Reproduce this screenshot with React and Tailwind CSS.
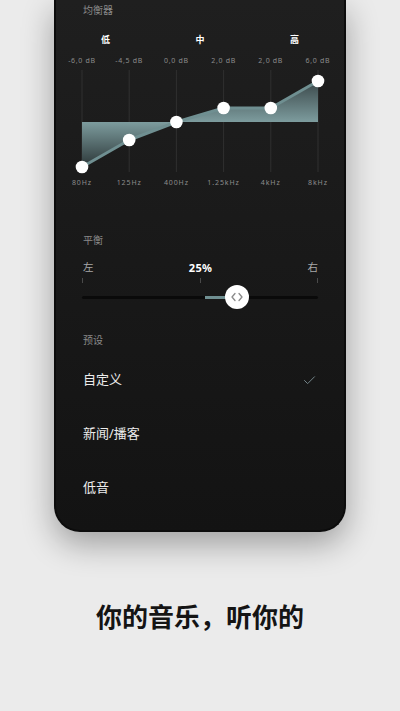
import React from "react";
import { Check } from "lucide-react";

const FONT = { fontFamily: '"Noto Sans", "Noto Sans CJK SC", sans-serif' };

const db = ["-6,0 dB", "-4,5 dB", "0,0 dB", "2,0 dB", "2,0 dB", "6,0 dB"];
const freqs = ["80Hz", "125Hz", "400Hz", "1.25kHz", "4kHz", "8kHz"];
const ys = [101, 74, 56, 42, 42, 15];
const xs = [0, 47.2, 94.4, 141.6, 188.8, 236];

function Chart() {
  const pts = xs.map((x, i) => `${x},${ys[i]}`).join(" ");
  const poly = `0,56 ${pts} 236,56`;
  return (
    <svg width="236" height="110" viewBox="0 0 236 110" className="block overflow-visible">
      <defs>
        <linearGradient id="eqfill" gradientUnits="userSpaceOnUse" x1="0" y1="15" x2="0" y2="101">
          <stop offset="0" stopColor="#3a4749" />
          <stop offset="0.477" stopColor="#7d9c9e" />
          <stop offset="1" stopColor="#2b3637" />
        </linearGradient>
      </defs>
      {xs.map((x, i) => (
        <line key={i} x1={x} y1="4" x2={x} y2="106" stroke="#303030" strokeWidth="1" />
      ))}
      <polygon points={poly} fill="url(#eqfill)" />
      <polyline points={pts} fill="none" stroke="#6f8f91" strokeWidth="3" strokeLinejoin="round" />
      {xs.map((x, i) => (
        <circle key={i} cx={x} cy={ys[i]} r="6.3" fill="#ffffff" />
      ))}
    </svg>
  );
}

export default function App() {
  return (
    <div className="w-[400px] h-[711px] bg-[#ebebeb] overflow-hidden flex flex-col items-center" style={FONT}>
      <div className="w-[292px] h-[532px] shrink-0 rounded-b-[26px] border-x-2 border-b-2 border-[#0c0c0c] bg-gradient-to-b from-[#1f1f1f] to-[#131313] shadow-[0_12px_32px_rgba(0,0,0,0.33)] px-[26px] pt-[3px] flex flex-col">
        <div className="text-[10px] leading-[14px] text-[#8a8a8a] pl-px">均衡器</div>

        <div className="-mx-[23.6px] mt-[17px] flex text-[9px] leading-[12px] font-bold text-white">
          <div className="w-[94.4px] text-center">低</div>
          <div className="w-[94.4px] text-center">中</div>
          <div className="w-[94.4px] text-center">高</div>
        </div>

        <div className="-mx-[23.6px] mt-[10px] flex text-[7px] leading-[10px] tracking-[0.7px] text-[#8c8c8c]">
          {db.map((d, i) => (
            <div key={i} className="w-[47.2px] text-center whitespace-nowrap">{d}</div>
          ))}
        </div>

        <div className="mt-0">
          <Chart />
        </div>

        <div className="-mx-[23.6px] mt-[2px] flex text-[7px] leading-[10px] tracking-[0.9px] text-[#8c8c8c]">
          {freqs.map((d, i) => (
            <div key={i} className="w-[47.2px] text-center whitespace-nowrap">{d}</div>
          ))}
        </div>

        <div className="mt-[45px] text-[10px] leading-[14px] text-[#8a8a8a] pl-px">平衡</div>

        <div className="mt-[13px] flex items-center justify-between h-[16px]">
          <span className="text-[10.5px] text-[#a8a8a8] pl-px">左</span>
          <span className="text-[11px] font-bold text-white tracking-[0.3px]">25%</span>
          <span className="text-[10.5px] text-[#a8a8a8]">右</span>
        </div>

        <div className="mt-[2px] flex justify-between h-[5px]">
          <div className="w-px h-full bg-[#4a4a4a]" />
          <div className="w-px h-full bg-[#4a4a4a]" />
          <div className="w-px h-full bg-[#4a4a4a]" />
        </div>

        <div className="mt-[2px] relative h-[24px] flex items-center">
          <div className="w-full h-[3px] rounded-full bg-[#0a0a0a]" />
          <div className="absolute left-[123px] w-[32px] h-[3px] bg-[#6f8f91] top-[10.5px]" />
          <div className="absolute left-[143px] top-0 w-[24px] h-[24px] rounded-full bg-white flex items-center justify-center">
            <svg width="12" height="10" viewBox="0 0 12 10" fill="none" stroke="#8a8a8a" strokeWidth="1.3" strokeLinecap="round" strokeLinejoin="round">
              <polyline points="4,1.5 1,5 4,8.5" />
              <polyline points="8,1.5 11,5 8,8.5" />
            </svg>
          </div>
        </div>

        <div className="mt-[24px] text-[10px] leading-[14px] text-[#8a8a8a] pl-px">预设</div>

        <div className="mt-[6px] h-[54px] flex items-center justify-between">
          <span className="text-[13px] text-[#ececec] pl-px">自定义</span>
          <Check size={15} strokeWidth={1.6} color="#74858a" className="mr-[1px]" />
        </div>
        <div className="h-[54px] flex items-center">
          <span className="text-[13px] text-[#ececec] pl-px">新闻/播客</span>
        </div>
        <div className="h-[54px] flex items-center">
          <span className="text-[13px] text-[#ececec] pl-px">低音</span>
        </div>
      </div>

      <div className="mt-[69px] text-[26px] leading-[32px] font-bold text-[#141414]">你的音乐，听你的</div>
    </div>
  );
}
